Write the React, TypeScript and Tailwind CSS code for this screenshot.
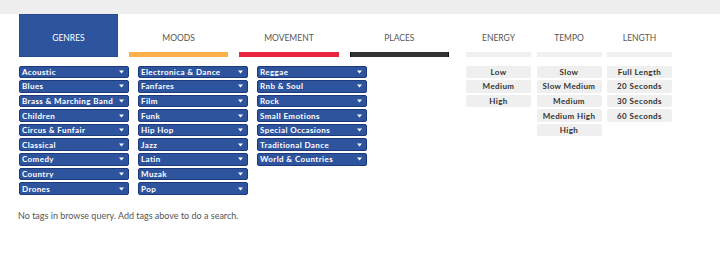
import React from 'react';

const genreCols: string[][] = [
  ['Acoustic', 'Blues', 'Brass & Marching Band', 'Children', 'Circus & Funfair', 'Classical', 'Comedy', 'Country', 'Drones'],
  ['Electronica & Dance', 'Fanfares', 'Film', 'Funk', 'Hip Hop', 'Jazz', 'Latin', 'Muzak', 'Pop'],
  ['Reggae', 'Rnb & Soul', 'Rock', 'Small Emotions', 'Special Occasions', 'Traditional Dance', 'World & Countries'],
];

const filters = [
  { title: 'ENERGY', items: ['Low', 'Medium', 'High'] },
  { title: 'TEMPO', items: ['Slow', 'Slow Medium', 'Medium', 'Medium High', 'High'] },
  { title: 'LENGTH', items: ['Full Length', '20 Seconds', '30 Seconds', '60 Seconds'] },
];

function Caret() {
  return (
    <svg width="5" height="4" viewBox="0 0 5 4" className="shrink-0">
      <path d="M0 0.5 H5 L2.5 3.5 Z" fill="#ffffff" />
    </svg>
  );
}

function TagButton({ label }: { label: string }) {
  return (
    <div className="flex h-[12.5px] w-[110px] items-center justify-between rounded-[2px] border border-[#1d3b7c] bg-[#2f549e] pl-[2px] pr-[4px]">
      <span className="text-[8px] font-bold leading-none tracking-[0.4px] text-white">{label}</span>
      <Caret />
    </div>
  );
}

function Tab({ label, bar, active }: { label: string; bar?: string; active?: boolean }) {
  if (active) {
    return (
      <div className="flex h-[43px] w-[99px] items-end justify-center border border-[#284a90] bg-[#2f549e] pb-[14px]">
        <span className="text-[8.5px] leading-none text-white">{label}</span>
      </div>
    );
  }
  return (
    <div className="flex h-[43px] w-[99.5px] flex-col justify-end">
      <div className="flex justify-center pb-[10px]">
        <span className="text-[8.5px] leading-none text-[#555555]">{label}</span>
      </div>
      <div className={`h-[5px] ${bar}`} />
    </div>
  );
}

export default function App() {
  return (
    <div className="h-[269px] w-[720px] bg-white font-['Lato','Open_Sans',sans-serif]">
      <div className="h-[14px] bg-[#eeeeee]" />
      <div className="flex pl-[19px]">
        <div className="w-[430px]">
          <div className="flex gap-[11px]">
            <Tab label="GENRES" active />
            <Tab label="MOODS" bar="bg-[#fbb04b]" />
            <Tab label="MOVEMENT" bar="bg-[#e8263f]" />
            <Tab label="PLACES" bar="bg-[#333333] border-x border-[#111111]" />
          </div>
          <div className="mt-[8.5px] flex gap-[9px]">
            {genreCols.map((col, i) => (
              <div key={i} className="flex flex-col gap-[2.1px]">
                {col.map((g) => (
                  <TagButton key={g} label={g} />
                ))}
              </div>
            ))}
          </div>
        </div>
        <div className="ml-[17px] flex gap-[5.5px]">
          {filters.map((f) => (
            <div key={f.title} className="flex w-[65px] flex-col">
              <div className="flex h-[43px] flex-col justify-end">
                <div className="flex justify-center pb-[10px]">
                  <span className="text-[8.5px] leading-none text-[#555555]">{f.title}</span>
                </div>
                <div className="h-[5px] bg-[#f0f0f0]" />
              </div>
              <div className="mt-[8.5px] flex flex-col gap-[2.1px]">
                {f.items.map((it) => (
                  <div
                    key={it}
                    className="flex h-[12.5px] items-center justify-center rounded-[2px] bg-[#efefef] text-[8px] font-bold leading-none tracking-[0.4px] text-[#333333]"
                  >
                    {it}
                  </div>
                ))}
              </div>
            </div>
          ))}
        </div>
      </div>
      <p className="mt-[16px] pl-[18px] text-[9px] leading-none text-[#555555]">
        No tags in browse query. Add tags above to do a search.
      </p>
    </div>
  );
}
